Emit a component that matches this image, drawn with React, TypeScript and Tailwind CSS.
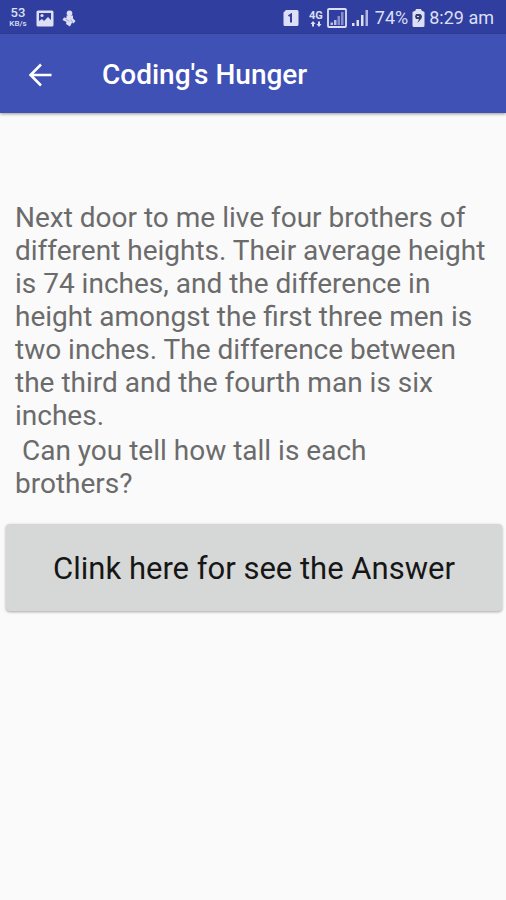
import { useState } from 'react';

const question =
  'Next door to me live four brothers of different heights. Their average height is 74 inches, and the difference in height amongst the first three men is two inches. The difference between the third and the fourth man is six inches.';

const PictureIcon = () => (
  <svg width="18" height="17" viewBox="0 0 18 17" aria-hidden="true">
    <rect x="0.5" y="0.5" width="17" height="16" rx="1.5" fill="currentColor" />
    <path d="M3 3h12v7l-3-3-4 4-2-2-3 2z" fill="#303f9f" />
    <circle cx="6" cy="5.5" r="1.6" fill="currentColor" />
  </svg>
);

const CleanerIcon = () => (
  <svg width="14" height="17" viewBox="0 0 14 17" fill="currentColor" aria-hidden="true">
    <circle cx="7.5" cy="3.3" r="2.8" />
    <path d="M4.5 5.5h6.5v3l2.5 2.5-2 2.5-1.5-1L8 16.500 4 14l.5-2L.5 10 2 7.500 4.500 8z" />
    <path d="M3.500 9l4 2.500M8.500 9.500l2.500 3" stroke="#303f9f" strokeWidth="0.8" opacity=".5" />
  </svg>
);

const SimIcon = () => (
  <svg width="16" height="17" viewBox="0 0 16 17" aria-hidden="true">
    <path d="M3 0h11a1.5 1.5 0 0 1 1.5 1.5v13A1.5 1.5 0 0 1 14 16H2a1.5 1.5 0 0 1-1.5-1.5v-12z" fill="currentColor" />
    <path d="M5.5 6L8 4.5v8" fill="none" stroke="#303f9f" strokeWidth="2" />
  </svg>
);

const DataArrows = () => (
  <svg width="12" height="6" viewBox="0 0 12 6" fill="currentColor" aria-hidden="true">
    <path d="M3 0l2.5 3H4v2.5H2V3H.5zM9 6L6.5 3H8V.5h2V3h1.5z" />
  </svg>
);

const BoxedSignal = () => (
  <svg width="20" height="20" viewBox="0 0 20 20" aria-hidden="true">
    <rect x="1" y="1" width="18" height="18" rx="1" fill="none" stroke="currentColor" strokeWidth="1.8" />
    <path d="M3.5 17v-2.5H6V17zM7 17v-5h2.5v5z" fill="currentColor" opacity=".8" />
    <path d="M10.5 17V8H13v9zM14 17V4h2.5v13z" fill="currentColor" opacity=".5" />
  </svg>
);

const Signal = () => (
  <svg width="18" height="18" viewBox="0 0 18 18" fill="currentColor" aria-hidden="true">
    <path d="M1 17v-3h2.5v3zM5.5 17v-6H8v6zM10 17V6h2.5v11z" />
    <path d="M14.5 17V1H17v16z" opacity=".75" />
  </svg>
);

const BatteryIcon = () => (
  <svg width="13" height="18" viewBox="0 0 13 18" aria-hidden="true">
    <path d="M4 0h5l.5 1.5 3 1.5v13.5A1.5 1.5 0 0 1 11 18H2a1.5 1.5 0 0 1-1.5-1.5V3l3-1.5z" fill="currentColor" />
    <path d="M4 5h4.5L10 7l-.5 2.500L5.500 14 7 10H4L3 7.500z" fill="#303f6f" />
    <path d="M5 7.5h2" stroke="currentColor" strokeWidth="1" />
  </svg>
);

const BackIcon = () => (
  <svg width="24" height="24" viewBox="0 0 24 24" fill="none" stroke="currentColor" strokeWidth="2.5" aria-hidden="true">
    <path d="M23.5 12H2M13 1.5L2.5 12 13 22.5" />
  </svg>
);

const StatusBar = () => (
  <div className="flex h-[34px] items-center justify-between bg-[#303f9f] pt-0.5 pr-3 pl-2 text-[#dcdff5]">
    <div className="flex items-center gap-2">
      <div className="flex w-5 flex-col items-center font-medium">
        <span className="text-[13px] leading-[12px]">53</span>
        <span className="text-[8px] leading-[10px]">KB/s</span>
      </div>
      <PictureIcon />
      <CleanerIcon />
    </div>
    <div className="flex items-center text-lg">
      <SimIcon />
      <div className="mr-1 ml-2.5 flex flex-col items-center">
        <span className="text-[11px] leading-[11px] font-bold">4G</span>
        <DataArrows />
      </div>
      <BoxedSignal />
      <div className="mr-1.5 ml-1">
        <Signal />
      </div>
      <span className="mr-1">74%</span>
      <BatteryIcon />
      <span className="ml-1">8:29 am</span>
    </div>
  </div>
);

const App = () => {
  const [pressed, setPressed] = useState<boolean>(false);

  return (
    <div className="min-h-screen bg-[#fafafa] font-[Roboto,sans-serif]">
      <StatusBar />
      <header className="flex h-[79px] items-center gap-[50px] bg-[#3f51b5] px-7 pt-0.5 text-white shadow-[0_1px_3px_rgba(0,0,0,0.4)]">
        <button type="button" aria-label="Back">
          <BackIcon />
        </button>
        <h1 className="text-[28px] font-medium">Coding's Hunger</h1>
      </header>
      <main className="pt-[88px]">
        <div className="flex flex-col gap-0.5 pr-2 pl-[15px] text-[28px] leading-[33px] text-[#6b6b6b]">
          <p>{question}</p>
          <p className="pr-20 whitespace-pre-wrap"> Can you tell how tall is each brothers?</p>
        </div>
        <div className="pt-6 pr-1 pl-1.5">
          <button
            type="button"
            aria-pressed={pressed}
            onClick={() => setPressed(!pressed)}
            className="w-full rounded-sm bg-[#d6d8d7] pt-[26px] pb-6 text-[31px] leading-[37px] text-[#161616] shadow-[0_1px_3px_rgba(0,0,0,0.35)]"
          >
            Clink here for see the Answer
          </button>
        </div>
      </main>
    </div>
  );
};

export default App;
